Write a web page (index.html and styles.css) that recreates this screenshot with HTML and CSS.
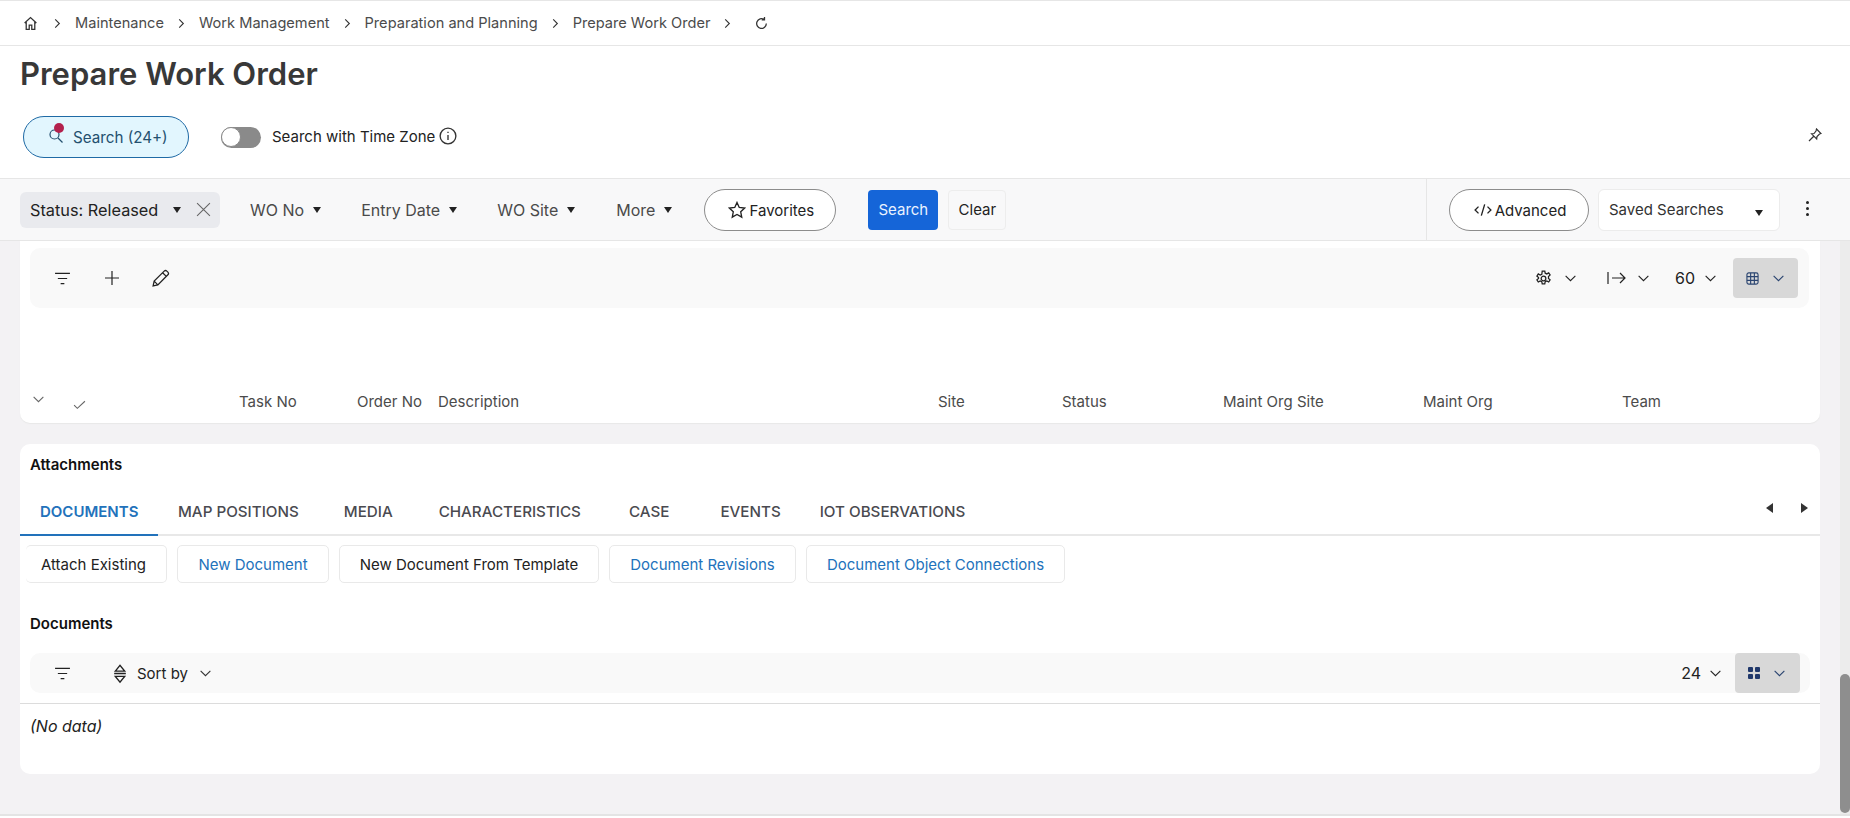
FILE: index.html
```html
<!DOCTYPE html>
<html lang="en">
<head>
    <meta charset="UTF-8">
    <meta name="viewport" content="width=device-width, initial-scale=1.0">
    <title>Prepare Work Order</title>
    <link rel="stylesheet" href="styles.css">
</head>
<body>
    <svg class="sprites" width="0" height="0">
        <symbol id="chev-right" viewBox="0 0 12 12"><path d="M3.5 1.5 8 6l-4.500 4.500"/></symbol>
        <symbol id="chev-down" viewBox="0 0 12 12"><path d="M1.500 3.500 6 8l4.500-4.500"/></symbol>
        <symbol id="filter" viewBox="0 0 18 14"><path d="M1 1.500h16M4 7h10M7 12.500h4"/></symbol>
    </svg>

    <nav class="crumbs">
        <svg class="icon home" viewBox="0 0 14 14"><path d="M1.500 6.500 7 1.500l5.500 5M3 5.500v7h2.800V8.500h2.400v4H11v-7"/></svg>
        <svg class="icon sep first"><use href="#chev-right"/></svg>
        <a>Maintenance</a>
        <svg class="icon sep"><use href="#chev-right"/></svg>
        <a>Work Management</a>
        <svg class="icon sep"><use href="#chev-right"/></svg>
        <a>Preparation and Planning</a>
        <svg class="icon sep"><use href="#chev-right"/></svg>
        <a>Prepare Work Order</a>
        <svg class="icon sep"><use href="#chev-right"/></svg>
        <svg class="icon refresh" viewBox="0 0 14 14"><path d="M11.500 7A4.500 4.500 0 1 1 9.500 3.300M9.800 1v2.600H7.200"/></svg>
    </nav>

    <header class="page-head">
        <h1>Prepare Work Order</h1>
        <div class="search-row">
            <button class="search-pill">
                <span class="lens">
                    <svg class="icon" viewBox="0 0 16 16"><circle cx="6.500" cy="6.500" r="4.500"/><path d="m10 10 4.500 4.500"/></svg>
                    <i class="dot"></i>
                </span>
                Search (24+)
            </button>
            <span class="toggle"><i></i></span>
            <span class="tz-label">Search with Time Zone</span>
            <svg class="icon info" viewBox="0 0 16 16"><circle cx="8" cy="8" r="7"/><path d="M8 7v4.500M8 4.200v1.200"/></svg>
            <svg class="icon pin" viewBox="0 0 14 14"><path d="m8.500 1 4.500 4.500-1.500.5-2.500 2.500-.3 2.500L3.500 5.800 6 5.500 8 3l.5-2ZM5.500 8.500 1 13"/></svg>
        </div>
    </header>

    <section class="filter-bar">
        <div class="filters">
            <div class="chip">Status: Released <b class="caret"></b>
                <svg class="icon chip-x" viewBox="0 0 14 14"><path d="m1 1 12 12M13 1 1 13"/></svg>
            </div>
            <span class="filter f-wo">WO No <b class="caret"></b></span>
            <span class="filter f-date">Entry Date <b class="caret"></b></span>
            <span class="filter f-site">WO Site <b class="caret"></b></span>
            <span class="filter f-more">More <b class="caret"></b></span>
            <button class="pill fav">
                <svg class="icon" viewBox="0 0 16 16"><path d="m8 1.300 2 4.400 4.800.6-3.500 3.300.9 4.800L8 12l-4.200 2.400.9-4.800L1.200 6.300 6 5.700Z"/></svg>
                Favorites
            </button>
            <button class="btn-primary">Search</button>
            <button class="btn-clear">Clear</button>
        </div>
        <div class="saved">
            <button class="pill adv">
                <svg class="icon" viewBox="0 0 16 16"><path d="M4 5 1 8l3 3M12 5l3 3-3 3M9.500 3l-3 10"/></svg>
                Advanced
            </button>
            <div class="saved-select">Saved Searches <b class="caret"></b></div>
            <span class="kebab"><i></i><i></i><i></i></span>
        </div>
    </section>

    <div class="workspace">
        <main class="content">
            <section class="card card-tasks">
                <div class="toolbar toolbar-tall">
                    <svg class="icon tool-filter"><use href="#filter"/></svg>
                    <svg class="icon tool-plus" viewBox="0 0 14 14"><path d="M7 0v14M0 7h14"/></svg>
                    <svg class="icon tool-pen" viewBox="0 0 18 18"><path d="M2 16l1-4.500L12.500 2a1.800 1.800 0 0 1 2.500 0l1 1a1.800 1.800 0 0 1 0 2.500L6.500 15ZM11 3.500 14.500 7M3 11.500 6.500 15"/></svg>
                    <div class="tool-right">
                        <svg class="icon gear" viewBox="0 0 16 16"><circle cx="8" cy="8" r="2.200"/><path d="M6.800 1h2.400l.4 2 1.500.7 1.800-1 1.300 2-1.500 1.400v1.800l1.500 1.400-1.300 2-1.800-1-1.500.7-.4 2H6.800l-.4-2-1.500-.7-1.800 1-1.300-2 1.500-1.400V7.100L1.800 5.700l1.300-2 1.800 1 1.500-.7Z"/></svg>
                        <svg class="icon chev gear-chev"><use href="#chev-down"/></svg>
                        <svg class="icon freeze" viewBox="0 0 20 14"><path d="M1 1v12M5 7h13M13 2l5 5-5 5"/></svg>
                        <svg class="icon chev freeze-chev"><use href="#chev-down"/></svg>
                        <span class="count">60</span>
                        <svg class="icon chev"><use href="#chev-down"/></svg>
                        <div class="view-btn view-table">
                            <svg class="icon grid-icon" viewBox="0 0 14 14"><rect x="1" y="1" width="12" height="12" rx="2"/><path d="M1 5h12M1 9h12M5 1v12M9 1v12"/></svg>
                            <svg class="icon chev"><use href="#chev-down"/></svg>
                        </div>
                    </div>
                </div>
                <div class="table-head">
                    <svg class="icon expand"><use href="#chev-down"/></svg>
                    <svg class="icon check" viewBox="0 0 12 12"><path d="m1 6.500 3 3L11 3"/></svg>
                    <span></span>
                    <span>Task No</span>
                    <span>Order No</span>
                    <span>Description</span>
                    <span>Site</span>
                    <span>Status</span>
                    <span>Maint Org Site</span>
                    <span>Maint Org</span>
                    <span>Team</span>
                </div>
            </section>

            <section class="card card-attach">
                <h2>Attachments</h2>
                <div class="tabs">
                    <a class="tab active">DOCUMENTS</a>
                    <a class="tab t-map">MAP POSITIONS</a>
                    <a class="tab t-media">MEDIA</a>
                    <a class="tab t-char">CHARACTERISTICS</a>
                    <a class="tab t-case">CASE</a>
                    <a class="tab t-events">EVENTS</a>
                    <a class="tab t-iot">IOT OBSERVATIONS</a>
                    <span class="tab-arrows"><b class="arrow-left"></b><b class="arrow-right"></b></span>
                </div>
                <div class="actions">
                    <button class="action a-first">Attach Existing</button>
                    <button class="action link a-new">New Document</button>
                    <button class="action a-tpl">New Document From Template</button>
                    <button class="action link a-rev">Document Revisions</button>
                    <button class="action link a-conn">Document Object Connections</button>
                </div>
                <h2 class="docs-title">Documents</h2>
                <div class="toolbar toolbar-low">
                    <svg class="icon tool-filter"><use href="#filter"/></svg>
                    <svg class="icon sort" viewBox="0 0 12 18"><path d="M2 7 6 2l4 5ZM1 9h10M2 11.500h8L6 16.500Z"/></svg>
                    <span class="sort-label">Sort by</span>
                    <svg class="icon chev"><use href="#chev-down"/></svg>
                    <div class="tool-right">
                        <span class="count">24</span>
                        <svg class="icon chev"><use href="#chev-down"/></svg>
                        <div class="view-btn view-cards">
                            <span class="tiles"><i></i><i></i><i></i><i></i></span>
                            <svg class="icon chev"><use href="#chev-down"/></svg>
                        </div>
                    </div>
                </div>
                <p class="no-data">(No data)</p>
            </section>
        </main>
        <div class="scroll-track"><div class="scroll-thumb"></div></div>
    </div>
</body>
</html>
```

FILE: styles.css
```css
* {
    box-sizing: border-box;
}
html, body {
    height: 100%;
}
body {
    margin: 0;
    height: 818px;
    overflow: hidden;
    display: flex;
    flex-direction: column;
    background: #fff;
    color: #333;
    font-family: Inter, "Liberation Sans", sans-serif;
    font-size: 15px;
}
button {
    font: inherit;
    cursor: pointer;
}
.sprites {
    position: absolute;
}
.icon {
    fill: none;
    stroke: currentColor;
    stroke-width: 1.2;
    flex: none;
}

/* breadcrumb */
.crumbs {
    height: 46px;
    flex: none;
    display: flex;
    align-items: center;
    padding-left: 23px;
    border-top: 1px solid #e6e6e6;
    border-bottom: 1px solid #e6e6e6;
    color: #4b4b4b;
    font-size: 14.600px;
}
.crumbs .home {
    width: 15px;
    height: 15px;
    color: #333;
}
.crumbs .sep {
    width: 11px;
    height: 11px;
    margin: 0 12px;
    color: #333;
}
.crumbs .sep.first {
    margin: 0 12px 0 14px;
}
.crumbs .refresh {
    width: 15px;
    height: 15px;
    margin-left: 9px;
    color: #333;
}

/* title + search */
.page-head {
    height: 132px;
    flex: none;
    padding-left: 20px;
}
h1 {
    margin: 0;
    padding-top: 6px;
    font-size: 31px;
    line-height: 44px;
    font-weight: 600;
    color: #383838;
}
.search-row {
    display: flex;
    align-items: center;
    margin-top: 20px;
    padding-left: 3px;
    height: 42px;
}
.search-pill {
    width: 166px;
    height: 42px;
    display: flex;
    align-items: center;
    gap: 9px;
    padding: 0 0 0 24px;
    border: 1px solid #1f6aa5;
    border-radius: 21px;
    background: #e2f6fe;
    color: #24506f;
    font-size: 15.200px;
}
.lens {
    position: relative;
    display: flex;
    margin-top: -2px;
}
.lens .icon {
    width: 16px;
    height: 16px;
}
.dot {
    position: absolute;
    top: -5px;
    left: 6px;
    width: 10px;
    height: 10px;
    border-radius: 50%;
    background: #b3214d;
}
.toggle {
    width: 40px;
    height: 21px;
    margin-left: 32px;
    border-radius: 11px;
    background: #8a8a8a;
    display: flex;
    align-items: center;
}
.toggle i {
    width: 20px;
    height: 20px;
    border-radius: 50%;
    background: #fff;
    border: 1px solid #8a8a8a;
}
.tz-label {
    margin-left: 11px;
    margin-top: -1px;
    color: #222;
}
.info {
    width: 18px;
    height: 18px;
    margin-left: 4px;
    margin-top: -3px;
    color: #333;
}
.pin {
    width: 14px;
    height: 14px;
    margin-left: auto;
    margin-right: 28px;
    margin-top: -4px;
}

/* filter bar */
.filter-bar {
    height: 63px;
    flex: none;
    display: flex;
    justify-content: space-between;
    background: #f8f8f9;
    border-top: 1px solid #e6e6e6;
    border-bottom: 1px solid #e6e6e6;
}
.filters {
    display: flex;
    align-items: center;
    padding-left: 20px;
}
.chip {
    width: 200px;
    height: 36px;
    display: flex;
    align-items: center;
    padding-left: 10px;
    border-radius: 6px;
    background: #e9eaee;
    color: #222;
    font-size: 16.300px;
    white-space: nowrap;
}
.chip .caret {
    margin-left: 15px;
}
.chip-x {
    width: 15px;
    height: 15px;
    margin-left: 15px;
    color: #666;
    stroke-width: 1;
}
.caret {
    display: inline-block;
    width: 0;
    height: 0;
    border-left: 4.500px solid transparent;
    border-right: 4.500px solid transparent;
    border-top: 6px solid #222;
}
.filter {
    display: flex;
    align-items: center;
    gap: 9px;
    font-size: 16px;
    color: #4a4a4a;
    white-space: nowrap;
}
.f-wo {
    margin-left: 30px;
}
.f-date {
    margin-left: 40px;
}
.f-site {
    margin-left: 40px;
}
.f-more {
    margin-left: 41px;
}
.pill {
    height: 42px;
    display: flex;
    align-items: center;
    justify-content: center;
    gap: 3px;
    padding-top: 2px;
    border: 1px solid #8c8c8c;
    border-radius: 21px;
    background: #fff;
    color: #222;
}
.pill .icon {
    width: 18px;
    height: 18px;
}
.fav {
    width: 132px;
    margin-left: 32px;
    padding-left: 8px;
}
.adv {
    width: 140px;
    padding-left: 8px;
}
.btn-primary {
    width: 70px;
    height: 40px;
    margin-left: 32px;
    border: none;
    border-radius: 4px;
    background: #1565d8;
    color: #eaf2ff;
}
.btn-clear {
    width: 58px;
    height: 40px;
    margin-left: 10px;
    border: 1px solid #ededed;
    border-radius: 4px;
    background: #f8f8f9;
    color: #222;
}
.saved {
    width: 424px;
    display: flex;
    align-items: center;
    padding-left: 22px;
    border-left: 1px solid #e6e6e6;
}
.saved-select {
    width: 182px;
    height: 42px;
    margin-left: 9px;
    display: flex;
    align-items: center;
    justify-content: space-between;
    padding: 0 16px 0 10px;
    border: 1px solid #ececec;
    border-radius: 6px;
    background: #fff;
    color: #333;
}
.saved-select .caret {
    margin-top: 6px;
}
.kebab {
    display: flex;
    flex-direction: column;
    gap: 3px;
    margin-left: 26px;
    margin-top: -2px;
}
.kebab i {
    width: 3px;
    height: 3px;
    border-radius: 50%;
    background: #222;
}

/* scrolled part */
.workspace {
    height: 575px;
    flex: none;
    display: flex;
    background: #f3f2f4;
    border-bottom: 2px solid #e4e4e4;
}
.content {
    flex: 1;
    min-width: 0;
    padding: 0 20px;
    overflow: hidden;
}
.scroll-track {
    width: 10px;
    flex: none;
    background: #ececec;
}
.scroll-thumb {
    height: 139px;
    margin-top: 433px;
    border-radius: 5px;
    background: #8e8e8e;
}
.card {
    background: #fff;
    border-radius: 0 0 10px 10px;
}
.card-tasks {
    height: 182px;
    padding-top: 7px;
    box-shadow: 0 1px 1px #e8e8e8;
}
.card-attach {
    height: 330px;
    margin-top: 21px;
    border-radius: 10px;
    padding-top: 11px;
}
.toolbar {
    display: flex;
    align-items: center;
    margin: 0 10px;
    background: #f9f9f9;
    border-radius: 10px;
}
.toolbar-tall {
    height: 60px;
    margin-right: 11px;
}
.toolbar-low {
    height: 40px;
}
.tool-filter {
    width: 17px;
    height: 13px;
    margin-left: 24px;
    color: #222;
    stroke-width: 1.3;
}
.tool-plus {
    width: 14px;
    height: 14px;
    margin-left: 34px;
    color: #222;
}
.tool-pen {
    width: 19px;
    height: 19px;
    margin-left: 32px;
    color: #222;
}
.tool-right {
    margin-left: auto;
    display: flex;
    align-items: center;
    color: #222;
}
.toolbar .chev {
    width: 13px;
    height: 13px;
    stroke-width: 1;
}
.gear {
    width: 17px;
    height: 17px;
}
.gear-chev {
    margin: 0 30px 0 12px;
}
.freeze {
    width: 20px;
    height: 14px;
    margin-right: 10px;
}
.freeze-chev {
    margin-right: 25px;
}
.tool-right .count {
    margin: 0 9px 0 0;
    font-size: 16px;
}
.toolbar-low .tool-right .count {
    margin-right: 8px;
}
.view-btn {
    width: 65px;
    height: 40px;
    display: flex;
    align-items: center;
    gap: 13px;
    padding-left: 13px;
    background: #d8d8d8;
    border-radius: 4px;
    color: #2a4470;
}
.view-table {
    margin: 0 11px 0 16px;
}
.view-cards {
    margin: 0 10px 0 13px;
}
.grid-icon {
    width: 13px;
    height: 13px;
}
.tiles {
    display: grid;
    grid-template-columns: 5px 5px;
    gap: 2px;
}
.tiles i {
    height: 5px;
    border-radius: 1px;
    background: #20386b;
}

/* table header */
.table-head {
    display: grid;
    grid-template-columns: 13px 41px 153px 118px 81px 500px 124px 161px 200px 199px auto;
    align-items: center;
    height: 30px;
    margin-top: 78px;
    padding-left: 12px;
    color: #4b4b4b;
}
.table-head .expand {
    width: 13px;
    height: 13px;
    margin-top: -3px;
    color: #666;
    stroke-width: 1;
}
.table-head .check {
    width: 13px;
    height: 13px;
    margin-left: 28px;
    margin-top: 7px;
    color: #666;
    stroke-width: 1;
}

/* attachments */
h2 {
    margin: 0;
    padding-left: 10px;
    font-size: 15px;
    line-height: 20px;
    font-weight: 600;
    color: #111;
}
.tabs {
    display: flex;
    align-items: center;
    height: 52px;
    margin-top: 9px;
    padding-top: 5px;
    border-bottom: 2px solid #e8e8e8;
    font-weight: 500;
    color: #4a4a50;
    font-size: 15.200px;
}
.tab {
    white-space: nowrap;
}
.tab.active {
    position: relative;
    align-self: stretch;
    width: 138px;
    padding-left: 20px;
    display: flex;
    align-items: center;
    color: #2272bb;
    font-weight: 600;
    font-size: 15px;
}
.tab.active::after {
    content: "";
    position: absolute;
    left: 0;
    right: 0;
    bottom: -2px;
    height: 2px;
    background: #2272bb;
}
.t-map {
    margin-left: 20px;
}
.t-media {
    margin-left: 45px;
}
.t-char {
    margin-left: 46px;
}
.t-case {
    margin-left: 48px;
}
.t-events {
    margin-left: 51px;
}
.t-iot {
    margin-left: 39px;
}
.tab-arrows {
    margin-left: auto;
    display: flex;
    gap: 28px;
    margin-right: 12px;
    margin-top: -7px;
}
.arrow-left, .arrow-right {
    width: 0;
    height: 0;
    border-top: 5px solid transparent;
    border-bottom: 5px solid transparent;
}
.arrow-left {
    border-right: 7px solid #333;
}
.arrow-right {
    border-left: 7px solid #333;
}
.actions {
    display: flex;
    gap: 10px;
    margin-top: 9px;
    padding-left: 6px;
}
.action {
    height: 38px;
    padding: 0;
    border: 1px solid #e9e9e9;
    border-radius: 5px;
    background: #fff;
    color: #222;
    white-space: nowrap;
}
.action.link {
    color: #2272bb;
}
.a-first {
    width: 141px;
    padding-right: 5px;
    border-left: none;
}
.a-new {
    width: 152px;
}
.a-tpl {
    width: 260px;
}
.a-rev {
    width: 187px;
}
.a-conn {
    width: 259px;
}
.docs-title {
    margin-top: 31px;
}
.toolbar-low {
    margin-top: 19px;
}
.sort {
    width: 14px;
    height: 21px;
    margin-left: 42px;
    color: #222;
}
.sort-label {
    margin-left: 10px;
    margin-right: 11px;
    color: #222;
}
.no-data {
    margin: 10px 0 0;
    padding: 12px 0 0 10px;
    border-top: 1px solid #dcdcdc;
    font-size: 16px;
    font-style: italic;
    color: #222;
    line-height: 20px;
}
```
